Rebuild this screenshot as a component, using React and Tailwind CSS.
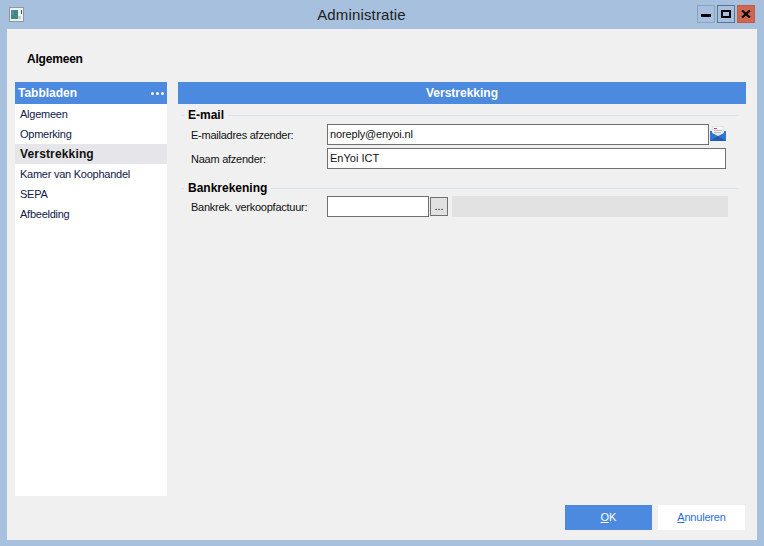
import React from 'react';

const font = "font-['Liberation_Sans',sans-serif]";

const tabs = ['Algemeen', 'Opmerking', 'Verstrekking', 'Kamer van Koophandel', 'SEPA', 'Afbeelding'];

function AppIcon() {
  return (
    <svg width="15" height="15" viewBox="0 0 15 15" className="block">
      <rect x="0" y="0" width="15" height="15" fill="#8f98a1" />
      <rect x="1" y="1" width="13" height="13" fill="#eef0f0" />
      <rect x="2" y="3" width="7" height="9" fill="#3f8a80" />
      <rect x="2" y="3" width="3" height="5" fill="#5b87b0" />
      <rect x="12" y="3" width="1" height="4" fill="#2a5c5a" />
      <rect x="9" y="9" width="3" height="3" fill="#c9cccc" />
    </svg>
  );
}

function MailIcon() {
  return (
    <svg width="16" height="16" viewBox="0 0 16 16" className="block">
      <path d="M2.3 0.3h11v8h-11z" fill="#f6f6f6" stroke="#d4d4d4" strokeWidth="0.6" />
      <rect x="4" y="2" width="3" height="1" fill="#d8434f" />
      <rect x="4" y="4" width="8" height="1" fill="#b4bcc6" />
      <rect x="4" y="6" width="7" height="1" fill="#b4bcc6" />
      <path d="M0 5l2 0 0 2 6 3 6-3 0-2 2 0v10H0z" fill="#2f74cf" />
      <path d="M0 15l8-5 8 5z" fill="#1f5cae" />
    </svg>
  );
}

function GroupTitle({ title }) {
  return (
    <div className="flex items-center h-[14px] pl-[3px] pr-[7px]">
      <div className="w-[3px] h-[1px] bg-[#d9e3ee]" />
      <span className="px-[4px] text-[12px] leading-[14px] font-bold text-black">{title}</span>
      <div className="flex-1 h-[1px] bg-[#d9e3ee]" />
    </div>
  );
}

function Field({ label, children }) {
  return (
    <div className="flex items-center">
      <div className="w-[149px] shrink-0 pl-[13px] pt-[1px] text-[11px] tracking-[-0.25px] whitespace-nowrap text-[#111]">
        {label}
      </div>
      {children}
    </div>
  );
}

export default function App() {
  return (
    <div className={`w-[764px] h-[546px] bg-[#a6c0dd] flex flex-col overflow-hidden ${font}`}>
      {/* Titelbalk */}
      <div className="h-[29px] flex items-center pl-[9px] pr-[9px] shrink-0">
        <AppIcon />
        <div className="flex-1 text-center text-[15px] tracking-[0.15px] pl-[2px] pt-[1px] text-[#222]">Administratie</div>
        <div className="flex gap-[2px] -mt-[1px]">
          <div className="w-[18px] h-[18px] border border-[#8aa3c0] flex items-center justify-center">
            <div className="w-[10px] h-[3px] bg-black mt-[3px]" />
          </div>
          <div className="w-[18px] h-[18px] border border-[#5e7590] flex items-center justify-center">
            <div className="w-[10px] h-[8px] border-2 border-black" />
          </div>
          <div className="w-[18px] h-[18px] bg-[#d2654f] border border-[#bd5c48] flex items-center justify-center">
            <svg width="10" height="8" viewBox="0 0 10 8">
              <path d="M1 0.5l8 7M9 0.5l-8 7" stroke="#000" strokeWidth="2.2" fill="none" />
            </svg>
          </div>
        </div>
      </div>

      {/* Inhoud */}
      <div className="flex-1 mx-[7px] mb-[6px] bg-[#f0f0f0] flex flex-col">
        <div className="h-[53px] pl-[20px] pt-[23px] text-[12px] tracking-[-0.2px] leading-[15px] font-bold text-black">Algemeen</div>

        <div className="flex h-[414px] pl-[8px] pr-[11px] gap-[11px]">
          <div className="w-[152px] bg-white flex flex-col">
            <div className="h-[22px] bg-[#4b8adf] flex items-center justify-between pl-[3px] pr-[3px] text-white">
              <span className="text-[12px] font-bold">Tabbladen</span>
              <div className="flex gap-[2px]">
                <div className="w-[3px] h-[3px] rounded-full bg-white" />
                <div className="w-[3px] h-[3px] rounded-full bg-white" />
                <div className="w-[3px] h-[3px] rounded-full bg-white" />
              </div>
            </div>
            {tabs.map((tab) => (
              <div
                key={tab}
                className={`h-[20px] flex items-center pl-[5px] ${
                  tab === 'Verstrekking'
                    ? 'bg-[#e6e6ea] font-bold text-[12px] tracking-[0.15px] text-[#111]'
                    : 'text-[11px] tracking-[-0.25px] text-[#10204a]'
                }`}
              >
                {tab}
              </div>
            ))}
          </div>

          <div className="flex-1 flex flex-col">
            <div className="h-[22px] bg-[#4b8adf] flex items-center justify-center text-white text-[12px] font-bold">
              Verstrekking
            </div>

            <div className="mt-[4px]">
              <GroupTitle title="E-mail" />
              <div className="mt-[2px] flex flex-col gap-[3px]">
                <Field label="E-mailadres afzender:">
                  <div className="w-[382px] h-[21px] bg-white border border-[#707070] pl-[2px] text-[11px] tracking-[-0.15px] leading-[19px] text-[#111]">
                    noreply@enyoi.nl
                  </div>
                  <div className="ml-[1px] -mt-[1px]">
                    <MailIcon />
                  </div>
                </Field>
                <Field label="Naam afzender:">
                  <div className="w-[399px] h-[21px] bg-white border border-[#707070] pl-[2px] text-[11px] leading-[19px] text-[#111]">
                    EnYoi ICT
                  </div>
                </Field>
              </div>
            </div>

            <div className="mt-[12px]">
              <GroupTitle title="Bankrekening" />
              <div className="mt-[1px]">
                <Field label="Bankrek. verkoopfactuur:">
                  <div className="w-[102px] h-[21px] bg-white border border-[#707070]" />
                  <div className="ml-[1px] w-[18px] h-[19px] bg-[#e1e1e1] border border-[#707070] flex items-center justify-center text-[11px] leading-[19px] text-[#111]">
                    ...
                  </div>
                  <div className="ml-[4px] w-[276px] h-[21px] bg-[#e2e2e2]" />
                </Field>
              </div>
            </div>
          </div>
        </div>

        {/* Knoppen */}
        <div className="flex justify-end gap-[6px] pt-[9px] pr-[12px]">
          <div className="w-[87px] h-[25px] bg-[#4b8adf] flex items-center justify-center text-[11px] text-white">
            <span><span className="underline">O</span>K</span>
          </div>
          <div className="w-[87px] h-[25px] bg-white flex items-center justify-center text-[11px] tracking-[-0.2px] text-[#2b6fdd]">
            <span><span className="underline">A</span>nnuleren</span>
          </div>
        </div>
      </div>
    </div>
  );
}
